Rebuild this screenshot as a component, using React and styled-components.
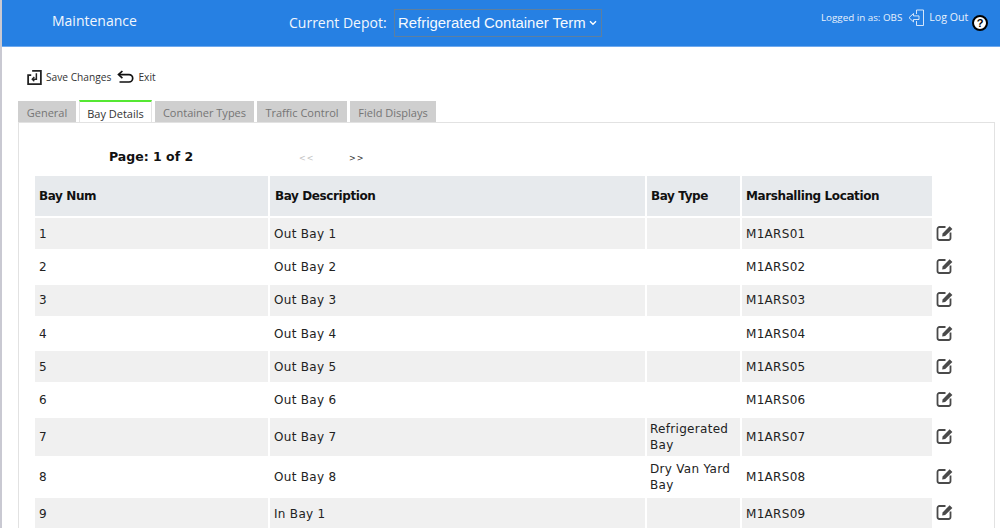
import React from "react";
import styled, { createGlobalStyle } from "styled-components";

const Global = createGlobalStyle`
  html, body { margin: 0; padding: 0; background: #fff; height: 528px; overflow: hidden; }
  * { box-sizing: border-box; }
`;
const Page = styled.div`
  width: 1000px; height: 528px; overflow: hidden; position: relative;
  border-left: 2px solid #c9c9d2; background: #fff;
  font-family: "Open Sans", "Liberation Sans", sans-serif;
  &::before {
    content: ""; position: absolute; left: -2px; top: 18px; width: 2px; height: 5px; background: #a8333c;
  }
  &::after {
    content: ""; position: absolute; left: -2px; top: 0; width: 2px; height: 4px; background: #4a4a55;
  }
`;
const Header = styled.header`
  height: 47px; background: #2680e3; border-bottom: 1px solid #6ea9ee; color: #fff;
  display: flex; align-items: flex-start; position: relative;
`;
const Title = styled.div`
  width: 287px; padding: 11px 0 0 50px; font-size: 14px; line-height: 20px; color: #f2f7fd;
`;
const DepotLabel = styled.div`
  padding-top: 13px; font-size: 14px; line-height: 20px; width: 105px; color: #f2f7fd; white-space: nowrap;
`;
const DepotSelect = styled.div`
  margin-top: 9px; width: 208px; height: 28px; border: 1px solid #5d7f9f;
  padding-left: 3px; font-size: 14.9px; line-height: 24px; display: flex; align-items: center; gap: 3px; white-space: nowrap;
  color: #f5f9fe; font-family: "Liberation Sans", sans-serif;
`;
const UserArea = styled.div`
  margin-left: auto; width: 179px; display: flex; align-items: flex-start; position: relative; padding: 9px 0 0 0;
`;
const Logged = styled.span`
  font-size: 9.8px; line-height: 18px; color: #e8f1fc; white-space: nowrap; margin-right: 6px;
`;
const LogOut = styled.span`
  font-size: 10.6px; line-height: 17px; color: #e8f1fc; white-space: nowrap; margin-left: 4px;
`;
const Help = styled.span`
  position: absolute; right: 12px; top: 15px; width: 16px; height: 16px; border-radius: 50%;
  background: #fff; border: 2px solid #000; color: #000; font: bold 11px/12px "Liberation Sans", sans-serif;
  text-align: center;
`;
const Toolbar = styled.div`
  height: 54px; padding: 6px 0 0 25px; display: flex; align-items: center; gap: 4px; font-size: 10.2px; color: #333;
`;
const ToolItem = styled.span`
  display: inline-flex; align-items: center; gap: 4px; white-space: nowrap; margin-right: 2px;
`;
const Tabs = styled.div`
  display: flex; gap: 3px; height: 21px; margin-left: 16px; position: relative; z-index: 1;
`;
const Tab = styled.div`
  width: ${p => p.$w}px; height: ${p => (p.$active ? 22 : 21)}px;
  margin-top: ${p => (p.$active ? -1 : 0)}px;
  text-align: center; font-size: 11px;
  line-height: 23px; white-space: nowrap;
  background: ${p => (p.$active ? "#fff" : "#cfcfcf")};
  color: ${p => (p.$active ? "#333" : "#757575")};
  border-top: ${p => (p.$active ? "2px solid #55e832" : "none")};
  border-left: ${p => (p.$active ? "1px solid #e4e4e4" : "none")};
  border-right: ${p => (p.$active ? "1px solid #e4e4e4" : "none")};
`;
const Panel = styled.section`
  margin: 0 5px 0 16px; height: 420px; border: 1px solid #e2e2e2; border-bottom: none; padding: 0 0 0 15px;
  font-family: "DejaVu Sans", Verdana, sans-serif;
`;
const Pager = styled.div`
  height: 51px; display: flex; align-items: flex-start; color: #111;
`;
const PageText = styled.div`
  margin: 27px 0 0 75px; width: 190px; font-size: 12.5px; line-height: 14px; font-weight: bold; white-space: nowrap;
`;
const PagerLink = styled.span`
  margin-top: 29px; width: 50px; font-size: 8px; line-height: 13px; letter-spacing: 1px;
  color: ${p => (p.$off ? "#c4c4c4" : "#333")};
`;
const Table = styled.table`
  border-collapse: separate; border-spacing: 2px; margin-left: -1px; table-layout: fixed; width: 915px;
  font-size: 12px; color: #222;
`;
const Th = styled.th`
  height: 40px; width: ${p => p.$w}px; background: #e7eaed; color: #111; text-align: left;
  font-size: 12px; letter-spacing: -0.4px; padding: 0 0 0 ${p => p.$pl || 4}px; font-weight: bold;
`;
const IconHead = styled.th`
  width: 30px;
`;
const Td = styled.td`
  height: ${p => (p.$tall ? 38 : 31.3)}px; padding: 2px 0 0 ${p => p.$pl || 4}px; line-height: 15.5px;
  background: ${p => (p.$odd ? "#f0f0f0" : "#fff")};
  letter-spacing: 0.3px;
`;
const IconCell = styled.td`
  padding: 0 0 2px 2px; background: #fff; line-height: 0;
`;

const rows = [
  ["1", "Out Bay 1", "", "M1ARS01"],
  ["2", "Out Bay 2", "", "M1ARS02"],
  ["3", "Out Bay 3", "", "M1ARS03"],
  ["4", "Out Bay 4", "", "M1ARS04"],
  ["5", "Out Bay 5", "", "M1ARS05"],
  ["6", "Out Bay 6", "", "M1ARS06"],
  ["7", "Out Bay 7", "Refrigerated Bay", "M1ARS07"],
  ["8", "Out Bay 8", "Dry Van Yard Bay", "M1ARS08"],
  ["9", "In Bay 1", "", "M1ARS09"],
];

const EditIcon = () => (
  <svg width="18" height="18" viewBox="0 0 18 18" fill="none" stroke="#4a4a4a">
    <path d="M9.5 3H3.4A1.9 1.9 0 0 0 1.5 4.9v9.2A1.9 1.9 0 0 0 3.4 16h9.2a1.9 1.9 0 0 0 1.9-1.9V8.5" strokeWidth="1.8" />
    <path d="M6.6 9.4 13.6 2.2l2.8 2.8-7.2 7-3 .4z" fill="#4a4a4a" stroke="none" />
  </svg>
);
const SaveIcon = () => (
  <svg width="15" height="15" viewBox="0 0 16 16" fill="none" stroke="#222" strokeWidth="1.9">
    <path d="M5.5 1h9.3v14H1.2V5.5h3.3" />
    <path d="M10 3.5v6.3H6" strokeWidth="1.6" />
    <path d="M7.8 7.5 5.6 9.8 7.8 12" strokeWidth="1.5" />
  </svg>
);
const ExitIcon = () => (
  <svg width="17" height="14" viewBox="0 0 17 14" fill="none" stroke="#111" strokeWidth="1.7">
    <path d="M5.4 1 1.5 4.6l3.9 3.6" />
    <path d="M2 4.6h10a3.7 3.7 0 0 1 0 7.4H2.5" />
  </svg>
);
const LogoutIcon = () => (
  <svg width="17" height="18" viewBox="0 0 17 18" fill="none" stroke="#e8f1fc" strokeWidth="0.9">
    <path d="M8.5 1h7v15.5h-7" />
    <path d="M8.5 1l0 4M8.5 12l0 4.5" />
    <path d="M1 8.7 5.5 4.5v2.4h5.5v3.6H5.5v2.4z" />
  </svg>
);
const Chevron = () => (
  <svg width="8" height="6" viewBox="0 0 8 6" fill="none" stroke="#fff" strokeWidth="1.4">
    <path d="M1 1.3 4 4.3l3-3" />
  </svg>
);

export default function App() {
  return (
    <Page>
      <Global />
      <Header>
        <Title>Maintenance</Title>
        <DepotLabel>Current Depot:</DepotLabel>
        <DepotSelect>Refrigerated Container Term <Chevron /></DepotSelect>
        <UserArea>
          <Logged>Logged in as: OBS</Logged>
          <LogoutIcon />
          <LogOut>Log Out</LogOut>
          <Help>?</Help>
        </UserArea>
      </Header>
      <Toolbar>
        <ToolItem><SaveIcon />Save Changes</ToolItem>
        <ToolItem><ExitIcon />Exit</ToolItem>
      </Toolbar>
      <Tabs>
        <Tab $w={58}>General</Tab>
        <Tab $w={73} $active>Bay Details</Tab>
        <Tab $w={99}>Container Types</Tab>
        <Tab $w={90}>Traffic Control</Tab>
        <Tab $w={86}>Field Displays</Tab>
      </Tabs>
      <Panel>
        <Pager>
          <PageText>Page: 1 of 2</PageText>
          <PagerLink $off>&lt;&lt;</PagerLink>
          <PagerLink>&gt;&gt;</PagerLink>
        </Pager>
        <Table>
          <thead>
            <tr>
              <Th $w={233}>Bay Num</Th>
              <Th $w={375} $pl={5}>Bay Description</Th>
              <Th $w={93}>Bay Type</Th>
              <Th $w={190}>Marshalling Location</Th>
              <IconHead />
            </tr>
          </thead>
          <tbody>
            {rows.map((r, i) => (
              <tr key={r[0]}>
                <Td $odd={i % 2 === 0} $tall={!!r[2]}>{r[0]}</Td>
                <Td $odd={i % 2 === 0} $tall={!!r[2]}>{r[1]}</Td>
                <Td $odd={i % 2 === 0} $tall={!!r[2]} $pl={3}>{r[2]}</Td>
                <Td $odd={i % 2 === 0} $tall={!!r[2]}>{r[3]}</Td>
                <IconCell><EditIcon /></IconCell>
              </tr>
            ))}
          </tbody>
        </Table>
      </Panel>
    </Page>
  );
}
